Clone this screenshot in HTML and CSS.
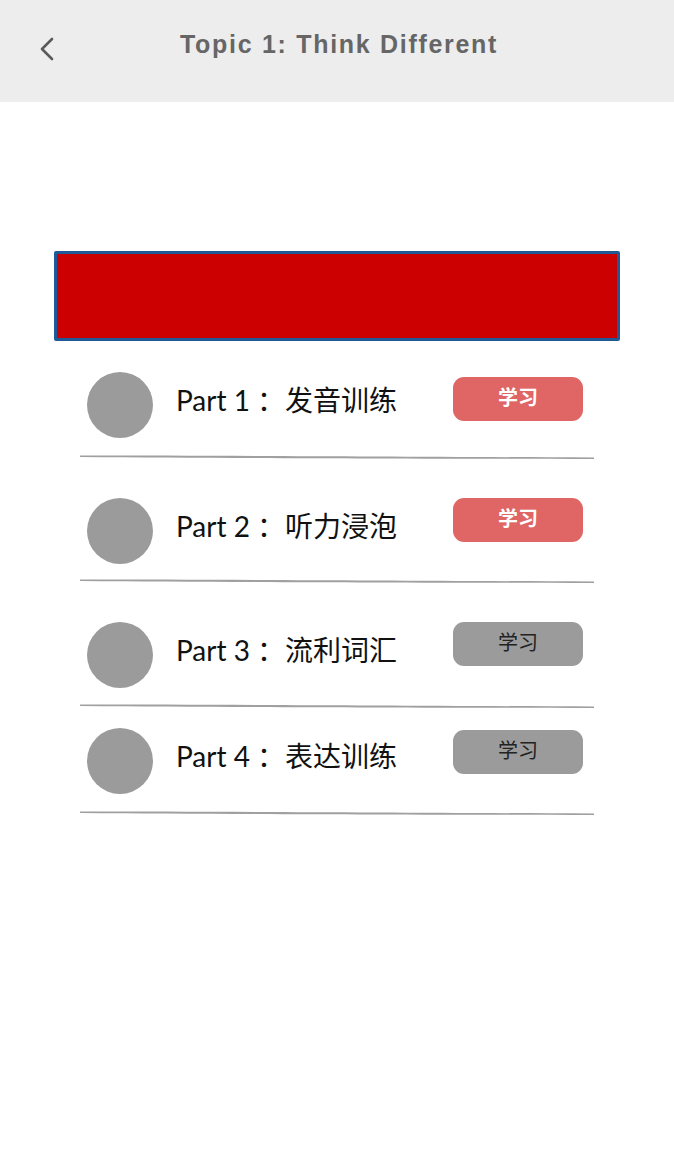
FILE: index.html
```html
<!DOCTYPE html>
<html lang="zh-CN">
<head>
<meta charset="utf-8">
<title>Topic 1: Think Different</title>
<link rel="stylesheet" href="styles.css">
</head>
<body>
<header class="topbar">
  <svg class="back" width="18" height="26" viewBox="0 0 18 26"><path d="M14 3 L4 13 L14 23" fill="none" stroke="#5a5a5a" stroke-width="2.6" stroke-linecap="round" stroke-linejoin="round"/></svg>
  <h1 class="title">Topic 1: Think Different</h1>
</header>
<main class="content">
  <div class="banner"></div>
  <ul class="parts">
    <li class="part part-1">
      <div class="row">
        <span class="avatar"></span>
        <span class="label">Part 1 ：发音训练</span>
        <span class="btn btn-active">学习</span>
      </div>
      <svg class="divider" width="514" height="6" viewBox="0 0 514 6"><path d="M0 1.6 C150 1.6 300 2.4 514 3.6 L514 5 C300 4.6 150 4 0 3 Z" fill="#a0a0a0"/></svg>
    </li>
    <li class="part part-2">
      <div class="row">
        <span class="avatar"></span>
        <span class="label">Part 2 ：听力浸泡</span>
        <span class="btn btn-active">学习</span>
      </div>
      <svg class="divider" width="514" height="6" viewBox="0 0 514 6"><path d="M0 1.6 C150 1.6 300 2.4 514 3.6 L514 5 C300 4.6 150 4 0 3 Z" fill="#a0a0a0"/></svg>
    </li>
    <li class="part part-3">
      <div class="row">
        <span class="avatar"></span>
        <span class="label">Part 3 ：流利词汇</span>
        <span class="btn">学习</span>
      </div>
      <svg class="divider" width="514" height="6" viewBox="0 0 514 6"><path d="M0 1.6 C150 1.6 300 2.4 514 3.6 L514 5 C300 4.6 150 4 0 3 Z" fill="#a0a0a0"/></svg>
    </li>
    <li class="part part-4">
      <div class="row">
        <span class="avatar"></span>
        <span class="label">Part 4 ：表达训练</span>
        <span class="btn">学习</span>
      </div>
      <svg class="divider" width="514" height="6" viewBox="0 0 514 6"><path d="M0 1.6 C150 1.6 300 2.4 514 3.6 L514 5 C300 4.6 150 4 0 3 Z" fill="#a0a0a0"/></svg>
    </li>
  </ul>
</main>
</body>
</html>
```

FILE: styles.css
```css
* { box-sizing: border-box; }

html, body {
  margin: 0;
  padding: 0;
  background: #ffffff;
}

body {
  width: 674px;
  min-height: 1150px;
  font-family: "Lato", "Noto Sans CJK SC", sans-serif;
  color: #1a1a1a;
}

.topbar {
  height: 102px;
  background: #ededed;
  display: flex;
  align-items: flex-start;
  padding: 36px 0 0 38px;
}

.back {
  display: block;
  flex: none;
}

.title {
  margin: -4px 0 0 124px;
  font-family: "Liberation Sans", Arial, sans-serif;
  font-weight: bold;
  font-size: 25px;
  line-height: 1;
  color: #666666;
  letter-spacing: 1.7px;
  white-space: nowrap;
}

.content {
  padding-top: 149px;
}

.banner {
  margin-left: 54px;
  width: 566px;
  height: 90px;
  background: #cc0000;
  border: 3px solid #1f5a96;
  border-radius: 2px;
}

.parts {
  list-style: none;
  margin: 0;
  padding: 0 0 0 80px;
  width: 594px;
}

.row {
  display: flex;
  align-items: center;
  padding-left: 7px;
  padding-right: 11px;
}

.avatar {
  flex: none;
  width: 66px;
  height: 66px;
  border-radius: 50%;
  background: #9b9b9b;
}

.label {
  flex: 1;
  margin-left: 23px;
  margin-bottom: 10px;
  font-size: 28px;
  line-height: 1;
  color: #111111;
  white-space: nowrap;
}

.btn {
  flex: none;
  width: 130px;
  height: 44px;
  border-radius: 11px;
  background: #9b9b9b;
  color: #222222;
  font-family: "Noto Sans CJK SC", sans-serif;
  font-size: 20px;
  line-height: 40px;
  text-align: center;
  margin-bottom: 22px;
}

.btn-active {
  background: #e06666;
  color: #ffffff;
  font-weight: bold;
}

.divider {
  display: block;
}

.part-1 .row { padding-top: 31px; padding-bottom: 16px; }
.part-2 .row { padding-top: 38px; padding-bottom: 14px; }
.part-3 .row { padding-top: 38px; padding-bottom: 15px; }
.part-4 .row { padding-top: 19px; padding-bottom: 16px; }

.part-1 .btn { margin-bottom: 12px; }
.part-4 .btn { margin-bottom: 18px; }
```
